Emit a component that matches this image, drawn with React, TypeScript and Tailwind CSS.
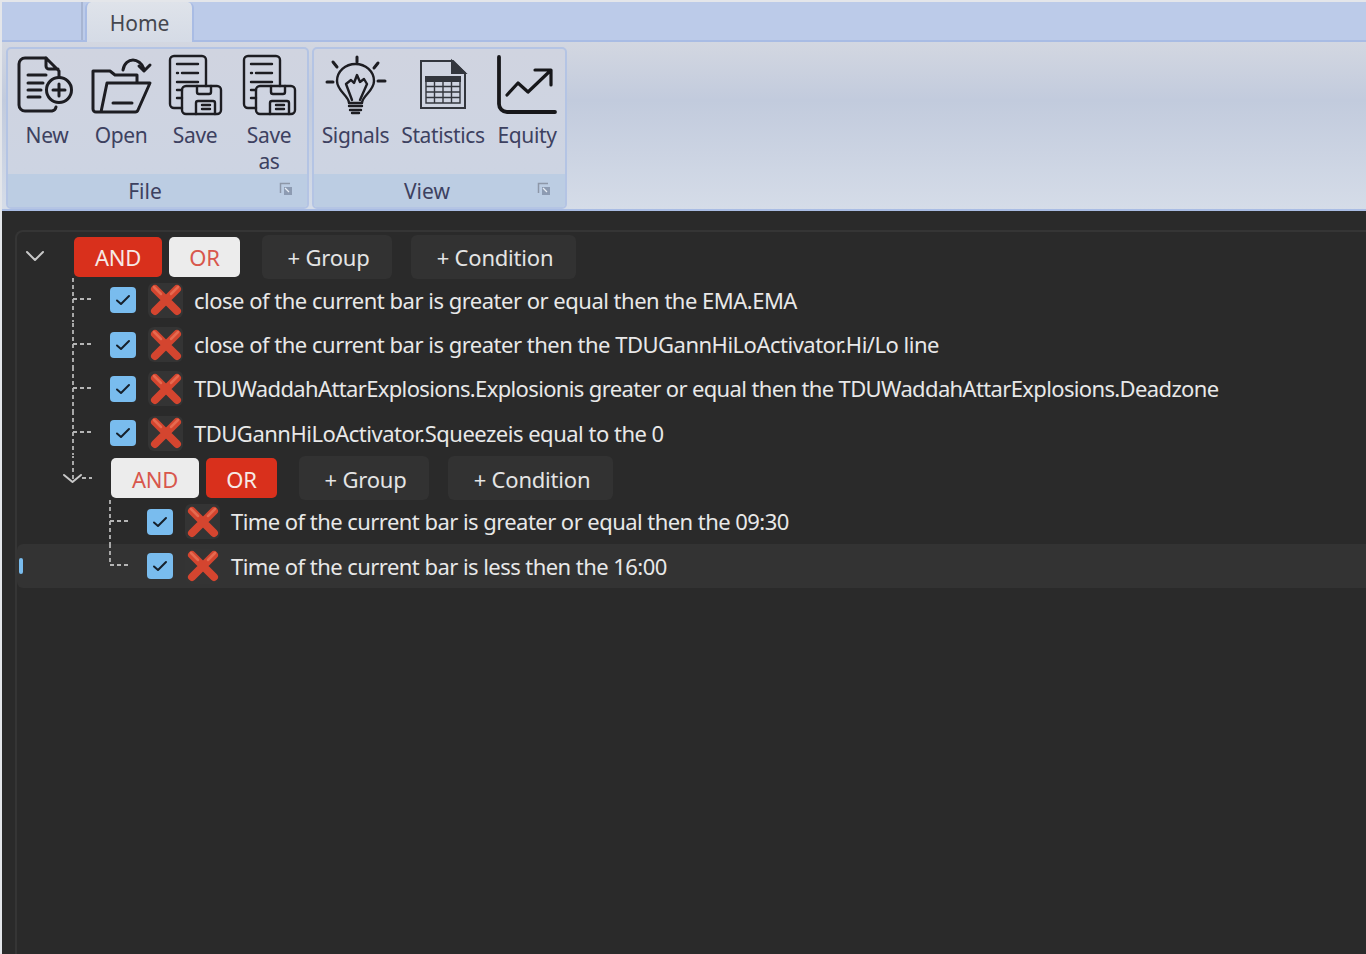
import React from 'react';

const ink = '#1d1d22';

const NewIcon = () => (
  <svg width="74" height="64" viewBox="11 52 74 64" fill="none" stroke={ink} strokeWidth="3" strokeLinecap="round" strokeLinejoin="round">
    <path d="M47 58H26a6 6 0 0 0-6 6v41a6 6 0 0 0 6 6h27a5 5 0 0 0 4-4" />
    <path d="M47 58l13 13v6M47 58v8a3 3 0 0 0 3 3h9" />
    <path d="M29 75h18M29 83h15M29 90h13M29 97h12" />
    <circle cx="60" cy="90" r="12.5" />
    <path d="M60 84v12M54 90h12" />
  </svg>
);

const OpenIcon = () => (
  <svg width="74" height="64" viewBox="84 52 74 64" fill="none" stroke={ink} strokeWidth="3" strokeLinecap="round" strokeLinejoin="round">
    <path d="M137 82v-7h-22l-5-4H93v38a3 3 0 0 0 3 3h39a3 3 0 0 0 3-2l12-27h-43l-6 29" />
    <path d="M113 103h19" />
    <path d="M123 70c1-7 6-10 10-10s9 3 11 9" />
    <path d="M139 66l5 5 6-6" />
  </svg>
);

const SaveIcon = () => (
  <svg width="74" height="64" viewBox="158 52 74 64" fill="none" stroke={ink} strokeWidth="2.400" strokeLinecap="round" strokeLinejoin="round">
    <path d="M182 108h-8a4 4 0 0 1-4-4V60a4 4 0 0 1 4-4h28a4 4 0 0 1 4 4v26" />
    <path d="M177 64h21M177 73h1M182 73h16M177 82h21M177 90h5M177 98h5" />
    <path d="M186 86h31a4 4 0 0 1 4 4v20a4 4 0 0 1-4 4h-31a4 4 0 0 1-4-4V90a4 4 0 0 1 4-4z" />
    <path d="M197 86v6a2 2 0 0 0 2 2h10a2 2 0 0 0 2-2v-6" />
    <path d="M196 114v-11a2 2 0 0 1 2-2h15a2 2 0 0 1 2 2v11M202 105h8M202 109h8" />
  </svg>
);

const BulbIcon = () => (
  <svg width="79" height="64" viewBox="316 52 79 64" fill="none" stroke={ink} strokeWidth="2.400" strokeLinecap="round" strokeLinejoin="round">
    <path d="M349 103c0-7-12-12-12-22a18.500 17 0 0 1 37 0c0 10-12 15-12 22z" />
    <path d="M352 100l-6-16 5-4 3 3 3-8 3 7 4-3 3 5-7 16" />
    <path d="M349 106h13M350 110h11M352 113h7" />
    <path d="M357 57v5M333 62l4 5M378 63l-4 5M327 82h6M378 81h7" strokeWidth="3" />
  </svg>
);

const SheetIcon = () => (
  <svg width="96" height="64" viewBox="395 52 96 64" fill="none" stroke="#33363d" strokeWidth="2">
    <path d="M421 61h32l12 12v35h-44z" />
    <path d="M452 61v12h13z" fill="#33363d" />
    <path d="M426 77h34v4h-34z" fill="#33363d" />
    <path d="M426 81h34v22h-34zM426 86.500h34M426 92h34M426 97.500h34M434.500 81v22M443 81v22M451.500 81v22" strokeWidth="1.400" />
  </svg>
);

const ChartIcon = () => (
  <svg width="72" height="64" viewBox="491 52 72 64" fill="none" stroke="#17171a" strokeLinecap="round" strokeLinejoin="round">
    <path d="M499 57v47a8 8 0 0 0 8 8h48" strokeWidth="3.800" />
    <path d="M507 95l11-12 10 9 22-21M535 70h16v15" strokeWidth="3.200" />
  </svg>
);

const RibbonButton = ({ icon, label, width, labelClass = '' }: { icon: React.ReactNode; label: string; width: string; labelClass?: string }) => (
  <div className={`flex flex-col items-center shrink-0 ${width}`}>
    {icon}
    <span className={`mt-[6px] text-center leading-[26px] text-[#3d4160] text-[21px] tracking-[-0.35px] ${labelClass}`}>{label}</span>
  </div>
);

const Launcher = () => (
  <svg width="14" height="14" viewBox="0 0 14 14" fill="none">
    <path d="M1.500 11V1.500H11" stroke="#8d97a8" strokeWidth="1.500" />
    <rect x="5" y="5" width="8" height="8" fill="#8d9bb2" />
    <path d="M6 6l4 4" stroke="#e7ecf4" strokeWidth="1.200" />
  </svg>
);

const RibbonGroup = ({ title, width, children }: { title: string; width: string; children: React.ReactNode }) => (
  <div className={`flex flex-col h-[162px] shrink-0 rounded-[5px] border-2 border-[#b4c4e4] overflow-hidden bg-gradient-to-b from-[#d0d4e0] to-[#ccd4e3] ${width}`}>
    <div className="flex-1 flex px-[2px] pt-[3px] min-h-0">{children}</div>
    <div className="relative h-[33px] shrink-0 flex items-center justify-center pr-[25px] bg-[#bccde3]">
      <span className="pt-[2px] text-[21px] leading-none text-[#3d4160]">{title}</span>
      <div className="absolute right-[14px] top-[8px]"><Launcher /></div>
    </div>
  </div>
);

const Ribbon = () => (
  <div className="h-[169px] shrink-0 flex gap-[3px] pl-[4px] pt-[5px] border-b-2 border-[#a9bce4] bg-gradient-to-b from-[#d3d7e1] via-[#c2cbdd] to-[#d5dce8] via-[35%]">
    <RibbonGroup title="File" width="w-[303px]">
      <RibbonButton icon={<NewIcon />} label="New" width="w-[74px]" />
      <RibbonButton icon={<OpenIcon />} label="Open" width="w-[74px]" />
      <RibbonButton icon={<SaveIcon />} label="Save" width="w-[74px]" />
      <RibbonButton icon={<SaveIcon />} label="Save as" width="w-[74px]" labelClass="max-w-[60px]" />
    </RibbonGroup>
    <RibbonGroup title="View" width="w-[255px]">
      <RibbonButton icon={<BulbIcon />} label="Signals" width="w-[79px]" />
      <RibbonButton icon={<SheetIcon />} label="Statistics" width="w-[96px]" />
      <RibbonButton icon={<ChartIcon />} label="Equity" width="w-[72px]" />
    </RibbonGroup>
  </div>
);

const LogicButtons = ({ op }: { op: 'AND' | 'OR' }) => {
  const on = 'bg-[#d9301c] text-[#f6e9e6]';
  const off = 'bg-[#ececec] text-[#d8574c]';
  return (
    <div className="flex items-center text-[22px] tracking-[-0.2px]">
      <button className={`w-[88px] h-[40px] pt-[2px] rounded-[5px] ${op === 'AND' ? on : off}`}>AND</button>
      <button className={`ml-[7px] w-[71px] h-[40px] pt-[2px] rounded-[5px] ${op === 'OR' ? on : off}`}>OR</button>
      <button className="ml-[22px] w-[130px] h-[44px] pt-[2px] pl-[3px] rounded-[6px] bg-[#323232] text-[#e4e4e4]">+ Group</button>
      <button className="ml-[19px] w-[165px] h-[44px] pt-[2px] pl-[3px] rounded-[6px] bg-[#323232] text-[#e4e4e4]">+ Condition</button>
    </div>
  );
};

const dash = { stroke: '#b5b5b5', strokeWidth: 1.8, strokeDasharray: '4 3', fill: 'none' };

// branch line in front of a condition row; last closes the dashed line off
const Branch = ({ last }: { last?: boolean }) => (
  <svg width="38" height="44" viewBox="0 0 38 44" className="shrink-0">
    <path d={last ? 'M1 0V21H20' : 'M1 0V44M1 21H20'} {...dash} />
  </svg>
);

const Check = () => (
  <div className="w-[26px] h-[26px] shrink-0 rounded-[4px] bg-[#79bcee] flex items-center justify-center">
    <svg width="16" height="14" viewBox="0 0 16 14" fill="none" stroke="#16202b" strokeWidth="2" strokeLinecap="round" strokeLinejoin="round">
      <path d="M2 7.500l4 3.500 8-8" />
    </svg>
  </div>
);

const Remove = () => (
  <div className="ml-[12px] w-[35px] h-[35px] shrink-0 rounded-[6px] bg-[#343434] flex items-center justify-center">
    <svg width="34" height="34" viewBox="0 0 34 34" fill="none" strokeLinecap="round">
      <path d="M6 6l22 22M28 6L6 28" stroke="#d4452f" strokeWidth="8" />
      <path d="M5 4l7 7M29 4l-7 7" stroke="#e56a50" strokeWidth="2.500" />
    </svg>
  </div>
);

const Condition = ({ text, nested, last, selected, tracking = 'tracking-[-0.5px]' }: { text: string; nested?: boolean; last?: boolean; selected?: boolean; tracking?: string }) => (
  <div className={`relative h-[44.4px] flex items-center ${nested ? 'pl-[92px]' : 'pl-[55px]'} ${selected ? 'bg-[#333333] rounded-l-[6px]' : ''}`}>
    {selected && <div className="absolute left-[2px] top-[14px] w-[4px] h-[16px] rounded-full bg-[#79bcee]" />}
    <Branch last={last} />
    <Check />
    <Remove />
    <span className={`ml-[11px] text-[22px] whitespace-nowrap text-[#e8e8e8] ${tracking}`}>{text}</span>
  </div>
);

const Tree = () => (
  <div className="ml-[13px] mt-[19px] flex-1 pt-[3px] rounded-tl-[8px] border-t-2 border-l-2 border-[#353535]">
    <div className="h-[43px] flex items-center">
      <svg width="20" height="12" viewBox="0 0 20 12" fill="none" stroke="#c8c8c8" strokeWidth="2" strokeLinecap="round" strokeLinejoin="round" className="ml-[8px] mr-[29px] mt-[-1px]">
        <path d="M2 2l8 8 8-8" />
      </svg>
      <LogicButtons op="AND" />
    </div>
    <Condition text="close of the current bar is greater or equal then the EMA.EMA" />
    <Condition text="close of the current bar is greater then the TDUGannHiLoActivator.Hi/Lo line" />
    <Condition tracking="tracking-[-0.64px]" text="TDUWaddahAttarExplosions.Explosionis greater or equal then the TDUWaddahAttarExplosions.Deadzone" />
    <Condition text="TDUGannHiLoActivator.Squeezeis equal to the 0" />
    <div className="h-[44px] flex items-center pl-[45px] pt-[1px]">
      <svg width="49" height="45" viewBox="0 0 49 45" fill="none" className="shrink-0">
        <path d="M11 -2V24M20 22H30" {...dash} />
        <path d="M2 19l8.500 7 8.500-7" stroke="#c8c8c8" strokeWidth="2" strokeLinecap="round" strokeLinejoin="round" />
      </svg>
      <LogicButtons op="OR" />
    </div>
    <Condition nested tracking="tracking-[-0.55px]" text="Time of the current bar is greater or equal then the 09:30" />
    <Condition nested last selected tracking="tracking-[-0.55px]" text="Time of the current bar is less then the 16:00" />
  </div>
);

export default function App() {
  return (
    <div className="w-[1366px] h-[954px] overflow-hidden bg-[#e4e6ea] pl-[2px] pt-[2px] flex flex-col" style={{ fontFamily: '"Noto Sans", sans-serif' }}>
      <div className="h-[40px] shrink-0 flex bg-[#bccbe9] border-b-2 border-[#a9bce4]">
        <div className="w-[81px] border-r-2 border-[#a7b5d2]" />
        <div className="ml-[2px] w-[109px] h-[40px] pt-[3px] rounded-t-[6px] border-x-2 border-[#a9bce4] bg-gradient-to-b from-[#dfe3ea] to-[#d5dbe6] flex items-center justify-center text-[21px] text-[#45474f]">
          Home
        </div>
      </div>
      <Ribbon />
      <div className="flex-1 min-h-0 bg-[#2a2a2a] flex flex-col">
        <Tree />
      </div>
    </div>
  );
}
